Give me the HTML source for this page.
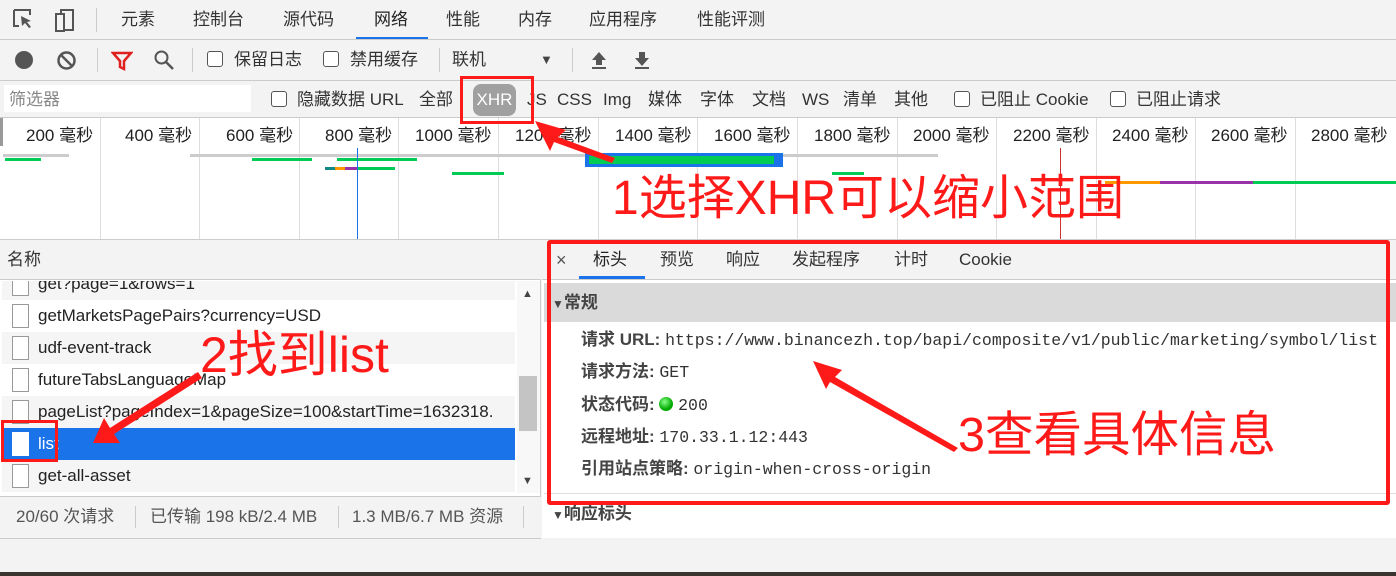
<!DOCTYPE html>
<html><head><meta charset="utf-8"><style>
*{margin:0;padding:0;box-sizing:border-box}
body{width:1396px;height:576px;overflow:hidden;background:#f3f3f3;font-family:"Liberation Sans","Noto Sans CJK SC",sans-serif;font-size:17px;line-height:20px;color:#333;position:relative}
.a{position:absolute;white-space:nowrap;line-height:20px}
.cb{position:absolute;width:16px;height:16px;border:1.5px solid #555;border-radius:3px;background:#fff}
.hl{position:absolute;height:1px;background:#cbcbcb}
.vl{position:absolute;width:1px;background:#ccc}
.tl{position:absolute;top:126px;font-size:17px;line-height:20px;color:#222;white-space:nowrap}
.g{position:absolute;top:118px;height:122px;width:1px;background:#ddd}
.row{position:absolute;left:2px;width:513px;height:32px}
.fi{position:absolute;left:10px;width:17px;height:24px;border:1.5px solid #999;background:#fff;top:4px}
.rt{position:absolute;left:36px;top:6px;font-size:17px;line-height:20px;color:#222;white-space:nowrap}
.mono{font-family:"Liberation Mono","DejaVu Sans Mono",monospace;font-size:16.5px}
.k{font-weight:bold;color:#444}
.red{color:#ff1a1a;position:absolute;white-space:nowrap;font-family:"Liberation Sans","Noto Sans CJK SC",sans-serif}
</style></head><body>
<!-- row1 -->
<svg class="a" style="left:12px;top:8px" width="70" height="26" viewBox="0 0 70 26"><path d="M2 2h16v5M2 2v16h5" fill="none" stroke="#555" stroke-width="2"/><path d="M9 8l10 5-4 1 4 5-2 1-4-5-3 3z" fill="#555"/><rect x="44" y="6" width="8" height="17" fill="none" stroke="#555" stroke-width="2"/><path d="M49 6V2h12v20h-9" fill="none" stroke="#555" stroke-width="2"/></svg>
<div class="vl" style="left:96px;top:8px;height:24px"></div>
<div class="a" style="left:121px;top:10px">元素</div>
<div class="a" style="left:193px;top:10px">控制台</div>
<div class="a" style="left:283px;top:10px">源代码</div>
<div class="a" style="left:374px;top:10px;color:#222">网络</div>
<div class="a" style="left:356px;top:37px;width:72px;height:3px;background:#1a73e8"></div>
<div class="a" style="left:446px;top:10px">性能</div>
<div class="a" style="left:518px;top:10px">内存</div>
<div class="a" style="left:589px;top:10px">应用程序</div>
<div class="a" style="left:697px;top:10px">性能评测</div>
<div class="hl" style="left:0;top:39px;width:1396px"></div>
<!-- row2 -->
<div class="a" style="left:15px;top:51px;width:18px;height:18px;border-radius:50%;background:#555"></div>
<svg class="a" style="left:56px;top:50px" width="21" height="21"><circle cx="10.5" cy="10.5" r="8" fill="none" stroke="#555" stroke-width="2.5"/><path d="M5 5l11 11" stroke="#555" stroke-width="2.5"/></svg>
<div class="vl" style="left:97px;top:48px;height:24px"></div>
<svg class="a" style="left:111px;top:50px" width="22" height="22"><path d="M2 3h18l-7 8v8l-4-2v-6z" fill="none" stroke="#e0201e" stroke-width="2.5"/></svg>
<svg class="a" style="left:153px;top:49px" width="22" height="22"><circle cx="8.5" cy="8.5" r="6" fill="none" stroke="#555" stroke-width="2"/><path d="M13 13l7 7" stroke="#555" stroke-width="2.5"/></svg>
<div class="vl" style="left:192px;top:48px;height:24px"></div>
<div class="cb" style="left:207px;top:51px"></div><div class="a" style="left:234px;top:50px">保留日志</div>
<div class="cb" style="left:323px;top:51px"></div><div class="a" style="left:350px;top:50px">禁用缓存</div>
<div class="vl" style="left:439px;top:48px;height:24px"></div>
<div class="a" style="left:452px;top:50px">联机</div>
<div class="a" style="left:540px;top:50px;font-size:13px;color:#444">▼</div>
<div class="vl" style="left:572px;top:48px;height:24px"></div>
<svg class="a" style="left:589px;top:50px" width="20" height="20"><path d="M10 2l7 8h-4v5H7v-5H3z" fill="#555"/><rect x="3" y="17" width="14" height="2" fill="#555"/></svg>
<svg class="a" style="left:632px;top:50px" width="20" height="20"><path d="M10 16l7-8h-4V2H7v6H3z" fill="#555"/><rect x="3" y="17" width="14" height="2" fill="#555"/></svg>
<div class="hl" style="left:0;top:80px;width:1396px"></div>
<!-- row3 -->
<div class="a" style="left:4px;top:85px;width:247px;height:27px;background:#fff"></div>
<div class="a" style="left:9px;top:90px;color:#888">筛选器</div>
<div class="cb" style="left:271px;top:91px"></div><div class="a" style="left:297px;top:90px">隐藏数据 URL</div>
<div class="a" style="left:419px;top:90px">全部</div>
<div class="vl" style="left:460px;top:88px;height:24px"></div>
<div class="a" style="left:473px;top:84px;width:43px;height:32px;border-radius:8px;background:#a0a0a0;color:#fff;text-align:center;line-height:32px">XHR</div>
<div class="a" style="left:527px;top:90px">JS</div>
<div class="a" style="left:557px;top:90px">CSS</div>
<div class="a" style="left:603px;top:90px">Img</div>
<div class="a" style="left:648px;top:90px">媒体</div>
<div class="a" style="left:700px;top:90px">字体</div>
<div class="a" style="left:752px;top:90px">文档</div>
<div class="a" style="left:802px;top:90px">WS</div>
<div class="a" style="left:843px;top:90px">清单</div>
<div class="a" style="left:894px;top:90px">其他</div>
<div class="cb" style="left:954px;top:91px"></div><div class="a" style="left:980px;top:90px">已阻止 Cookie</div>
<div class="cb" style="left:1110px;top:91px"></div><div class="a" style="left:1136px;top:90px">已阻止请求</div>
<div class="hl" style="left:0;top:117px;width:1396px"></div>
<!-- timeline -->
<div class="a" style="left:0;top:118px;width:1396px;height:122px;background:#fff"></div>
<div class="a" style="left:0;top:118px;width:3px;height:28px;background:#999"></div>
<div class="g" style="left:100px"></div><div class="g" style="left:199px"></div><div class="g" style="left:299px"></div><div class="g" style="left:398px"></div><div class="g" style="left:498px"></div><div class="g" style="left:598px"></div><div class="g" style="left:697px"></div><div class="g" style="left:797px"></div><div class="g" style="left:897px"></div><div class="g" style="left:996px"></div><div class="g" style="left:1096px"></div><div class="g" style="left:1195px"></div><div class="g" style="left:1295px"></div>
<div class="tl" style="left:26px">200 毫秒</div><div class="tl" style="left:125px">400 毫秒</div><div class="tl" style="left:226px">600 毫秒</div><div class="tl" style="left:325px">800 毫秒</div><div class="tl" style="left:415px">1000 毫秒</div><div class="tl" style="left:515px">1200 毫秒</div><div class="tl" style="left:615px">1400 毫秒</div><div class="tl" style="left:714px">1600 毫秒</div><div class="tl" style="left:814px">1800 毫秒</div><div class="tl" style="left:913px">2000 毫秒</div><div class="tl" style="left:1013px">2200 毫秒</div><div class="tl" style="left:1112px">2400 毫秒</div><div class="tl" style="left:1211px">2600 毫秒</div><div class="tl" style="left:1311px">2800 毫秒</div>
<div class="a" style="left:3px;top:154px;width:66px;height:3px;background:#ccc"></div>
<div class="a" style="left:190px;top:154px;width:748px;height:3px;background:#ccc"></div>
<div class="a" style="left:5px;top:158px;width:36px;height:3px;background:#0c5"></div>
<div class="a" style="left:252px;top:158px;width:60px;height:3px;background:#0c5"></div>
<div class="a" style="left:337px;top:158px;width:80px;height:3px;background:#0c5"></div>
<div class="a" style="left:325px;top:167px;width:10px;height:3px;background:#188"></div>
<div class="a" style="left:335px;top:167px;width:10px;height:3px;background:#f90"></div>
<div class="a" style="left:345px;top:167px;width:12px;height:3px;background:#93a"></div>
<div class="a" style="left:357px;top:167px;width:38px;height:3px;background:#0c5"></div>
<div class="a" style="left:452px;top:172px;width:52px;height:3px;background:#0c5"></div>
<div class="a" style="left:585px;top:153px;width:198px;height:14px;background:#1a73e8"></div>
<div class="a" style="left:589px;top:156px;width:185px;height:8px;background:#0c5"></div>
<div class="a" style="left:832px;top:172px;width:32px;height:3px;background:#0c5"></div>
<div class="a" style="left:1105px;top:181px;width:55px;height:3px;background:#f90"></div>
<div class="a" style="left:1160px;top:181px;width:93px;height:3px;background:#93a"></div>
<div class="a" style="left:1253px;top:181px;width:143px;height:3px;background:#0c5"></div>
<div class="a" style="left:357px;top:148px;width:1px;height:92px;background:#1a73e8"></div>
<div class="a" style="left:1060px;top:148px;width:1px;height:92px;background:#c33"></div>
<div class="hl" style="left:0;top:239px;width:1396px"></div>
<!-- left panel -->
<div class="a" style="left:0;top:240px;width:541px;height:298px;background:#fff;border-right:1px solid #ccc"></div>
<div class="a" style="left:0;top:240px;width:541px;height:40px;background:#f3f3f3;border-bottom:1px solid #ccc"></div>
<div class="a" style="left:7px;top:250px">名称</div>
<div class="a" style="left:0;top:281px;width:540px;height:212px;overflow:hidden">
<div class="row" style="top:-13px;background:#f5f5f5"><div class="fi"></div><div class="rt">get?page=1&amp;rows=1</div></div>
<div class="row" style="top:19px"><div class="fi"></div><div class="rt">getMarketsPagePairs?currency=USD</div></div>
<div class="row" style="top:51px;background:#f5f5f5"><div class="fi"></div><div class="rt">udf-event-track</div></div>
<div class="row" style="top:83px"><div class="fi"></div><div class="rt">futureTabsLanguageMap</div></div>
<div class="row" style="top:115px;background:#f5f5f5"><div class="fi"></div><div class="rt">pageList?pageIndex=1&amp;pageSize=100&amp;startTime=1632318.</div></div>
<div class="row" style="top:147px;background:#1a73e8"><div class="fi" style="border-color:#fff"></div><div class="rt" style="color:#fff">list</div></div>
<div class="row" style="top:179px;background:#f5f5f5"><div class="fi"></div><div class="rt">get-all-asset</div></div>
<div class="a" style="left:517px;top:0;width:23px;height:212px;background:#f8f8f8"></div>
<div class="a" style="left:519px;top:95px;width:18px;height:55px;background:#c4c4c4"></div>
<div class="a" style="left:522px;top:3px;font-size:11px;color:#444">▲</div>
<div class="a" style="left:522px;top:190px;font-size:11px;color:#444">▼</div>
</div>
<div class="a" style="left:0;top:496px;width:541px;height:42px;background:#f3f3f3;border-top:1px solid #ccc"></div>
<div class="a" style="left:16px;top:507px;color:#555">20/60 次请求</div>
<div class="vl" style="left:135px;top:506px;height:22px"></div>
<div class="a" style="left:150px;top:507px;color:#555">已传输 198 kB/2.4 MB</div>
<div class="vl" style="left:338px;top:506px;height:22px"></div>
<div class="a" style="left:352px;top:507px;color:#555">1.3 MB/6.7 MB 资源</div>
<div class="vl" style="left:523px;top:506px;height:22px"></div>
<div class="hl" style="left:0;top:538px;width:541px"></div>
<!-- right panel -->
<div class="a" style="left:542px;top:240px;width:854px;height:298px;background:#fff"></div>
<div class="a" style="left:542px;top:240px;width:854px;height:40px;background:#f3f3f3;border-bottom:1px solid #ccc"></div>
<div class="a" style="left:556px;top:250px;font-size:18px;color:#555">×</div>
<div class="a" style="left:593px;top:250px;color:#222">标头</div>
<div class="a" style="left:579px;top:276px;width:66px;height:3px;background:#1a73e8"></div>
<div class="a" style="left:660px;top:250px">预览</div>
<div class="a" style="left:726px;top:250px">响应</div>
<div class="a" style="left:792px;top:250px">发起程序</div>
<div class="a" style="left:894px;top:250px">计时</div>
<div class="a" style="left:959px;top:250px">Cookie</div>
<div class="a" style="left:544px;top:283px;width:852px;height:39px;background:#dadada"></div>
<div class="a k" style="left:552px;top:293px"><span style="font-size:12px">▼</span>常规</div>
<div class="a" style="left:581px;top:330px"><span class="k">请求 URL:</span> <span class="mono">https://www.binancezh.top/bapi/composite/v1/public/marketing/symbol/list</span></div>
<div class="a" style="left:581px;top:362px"><span class="k">请求方法:</span> <span class="mono">GET</span></div>
<div class="a" style="left:581px;top:395px"><span class="k">状态代码:</span> <span style="display:inline-block;width:14px;height:14px;border-radius:50%;background:radial-gradient(circle at 40% 35%,#8f8,#0a0 60%);vertical-align:-1px"></span> <span class="mono">200</span></div>
<div class="a" style="left:581px;top:427px"><span class="k">远程地址:</span> <span class="mono">170.33.1.12:443</span></div>
<div class="a" style="left:581px;top:459px"><span class="k">引用站点策略:</span> <span class="mono">origin-when-cross-origin</span></div>
<div class="hl" style="left:544px;top:493px;width:852px;background:#ddd"></div>
<div class="a k" style="left:552px;top:504px"><span style="font-size:12px">▼</span>响应标头</div>
<div class="a" style="left:0;top:572px;width:1396px;height:4px;background:#3a3431"></div>
<!-- annotations -->
<div class="a" style="left:460px;top:76px;width:74px;height:48px;border:3px solid #ff1a1a"></div>
<div class="a" style="left:1px;top:420px;width:57px;height:42px;border:3px solid #ff1a1a"></div>
<div class="a" style="left:547px;top:240px;width:843px;height:265px;border:4px solid #ff1a1a;border-radius:3px"></div>
<svg class="a" style="left:0;top:0" width="1396" height="576">
<polygon points="535,121 566,130 558,137 615,158 612,163 554,142 550,151" fill="#ff1a1a"/>
<polygon points="93,443 104,418 110,428 198,372 202,378 114,434 120,443" fill="#ff1a1a"/>
<polygon points="813,361 842,370 835,377 958,448 954,452 830,382 826,389" fill="#ff1a1a"/>
</svg>
<div class="red" style="left:612px;top:170px;font-size:48px;line-height:58px">1选择XHR可以缩小范围</div>
<div class="red" style="left:200px;top:325px;font-size:50px;line-height:60px">2找到list</div>
<div class="red" style="left:958px;top:405px;font-size:48.5px;line-height:60px">3查看具体信息</div>
</body></html>
